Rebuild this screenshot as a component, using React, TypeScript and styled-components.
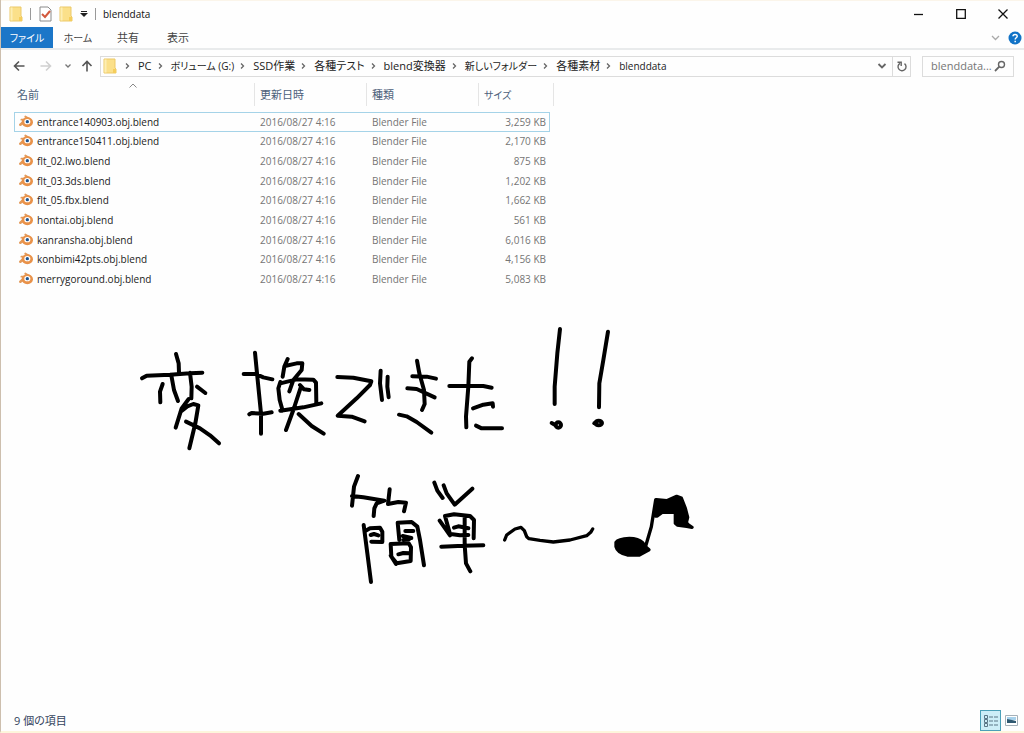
import React from "react";
import styled, { createGlobalStyle } from "styled-components";

const GlobalStyle = createGlobalStyle`
  *, *::before, *::after { box-sizing: border-box; }
  body {
    margin: 0;
    background: #fefefe;
    color: #1c1c1c;
    font: 11px/14px "Open Sans", "Noto Sans CJK JP", sans-serif;
    font-feature-settings: "palt";
  }
  button, input { font: inherit; font-feature-settings: inherit; color: inherit; }
  button { border: 0; padding: 0; background: none; }
  svg { display: block; flex: none; }
`;

const Window = styled.div`
  display: flex;
  flex-direction: column;
  min-height: 100vh;
  border-left: 1px solid #cdbfae;
  border-bottom: 2px solid #fdf6dc;
`;

const TitleBar = styled.header`
  display: flex;
  align-items: center;
  height: 27px;
  padding: 0 11px 0 8px;
  border-top: 1px solid #fbf5ea;
`;

const QuickAccess = styled.div`
  display: flex;
  align-items: center;
  gap: 7px;
  margin-right: 7px;
`;

const Divider = styled.span`
  width: 1px;
  height: 12px;
  background: #999;
`;

const Title = styled.h1`
  flex: 1;
  margin: 0;
  font-size: 10px;
  font-weight: 400;
  color: #111;
`;

const WindowButtons = styled.div`
  display: flex;
  gap: 22px;
`;

const IconButton = styled.button<{ $w?: number; $h?: number }>`
  display: flex;
  align-items: center;
  justify-content: center;
  width: ${(p) => p.$w ?? 20}px;
  height: ${(p) => p.$h ?? 20}px;
`;

const Ribbon = styled.nav`
  display: flex;
  align-items: center;
  height: 23px;
  padding-right: 2px;
  border-bottom: 2px solid #e9ebec;
`;

const Tab = styled.button<{ $primary?: boolean; $small?: boolean }>`
  width: ${(p) => (p.$primary ? 52 : 50)}px;
  height: 21px;
  font-size: ${(p) => (p.$small ? 10 : 11)}px;
  background: ${(p) => (p.$primary ? "#1b76c8" : "transparent")};
  color: ${(p) => (p.$primary ? "#fff" : "#444")};
`;

const RibbonTools = styled.div`
  display: flex;
  align-items: center;
  gap: 8px;
  margin-left: auto;
`;

const NavBar = styled.div`
  display: flex;
  align-items: center;
  height: 30px;
  padding: 2px 10px 0 8px;
`;

const NavButtons = styled.div`
  display: flex;
  align-items: center;
  width: 91px;
`;

const AddressBar = styled.div`
  display: flex;
  flex: 1;
  align-items: center;
  height: 21px;
  border: 1px solid #dcdcdc;
`;

const Crumbs = styled.ol`
  display: flex;
  flex: 1;
  align-items: center;
  margin: 0;
  padding: 0;
  list-style: none;
`;

const Crumb = styled.li<{ $small: boolean }>`
  display: flex;
  align-items: center;
  gap: 8px;
  margin-left: 6px;
  font-size: ${(p) => (p.$small ? 10 : 11)}px;
  white-space: nowrap;
  a { color: #222; text-decoration: none; }
`;

const Refresh = styled(IconButton)`
  border-left: 1px solid #dcdcdc;
`;

const SearchBox = styled.label`
  display: flex;
  align-items: center;
  width: 92px;
  height: 21px;
  margin-left: 11px;
  padding: 0 7px 0 8px;
  border: 1px solid #dcdcdc;
`;

const SearchInput = styled.input`
  flex: 1;
  min-width: 0;
  padding: 0;
  border: 0;
  outline: 0;
  background: none;
  font-size: 11px;
  &::placeholder { color: #767676; opacity: 1; }
`;

const FileTable = styled.table`
  width: 536px;
  height: 209px;
  margin-left: 13px;
  border-collapse: separate;
  border-spacing: 0;
  table-layout: fixed;
`;

const HeaderCell = styled.th<{ $w: number; $small?: boolean }>`
  position: relative;
  width: ${(p) => p.$w}px;
  height: 32px;
  padding: 0 0 2px ${(p) => (p.$w === 240 ? 3 : 6)}px;
  font-size: ${(p) => (p.$small ? 10 : 11)}px;
  font-weight: 400;
  text-align: left;
  color: #4c607a;
  &::after {
    content: "";
    position: absolute;
    top: 3px;
    right: ${(p) => (p.$w === 72 ? -4 : -1)}px;
    width: 1px;
    height: 23px;
    background: #e5e5e5;
  }
`;

const SortMark = styled.svg`
  position: absolute;
  top: 3px;
  left: 115px;
`;

const FileRow = styled.tr<{ $focused: boolean }>`
  outline: ${(p) => (p.$focused ? "1px solid #a5d3e8" : "none")};
  outline-offset: -1px;
`;

const Cell = styled.td<{ $right?: boolean }>`
  padding: 0 ${(p) => (p.$right ? 4 : 0)}px 0 6px;
  font-size: 10px;
  text-align: ${(p) => (p.$right ? "right" : "left")};
  color: #757575;
  white-space: nowrap;
`;

const NameCell = styled(Cell)`
  padding-left: 4px;
  color: #1c1c1c;
`;

const FileName = styled.div`
  display: flex;
  align-items: center;
  gap: 3px;
`;

const Canvas = styled.div`
  flex: 1;
  padding: 31px 0 0 129px;
`;

const StatusBar = styled.footer`
  display: flex;
  align-items: center;
  justify-content: space-between;
  height: 21px;
  padding: 0 6px 0 13px;
  color: #33435c;
`;

const ViewButtons = styled.div`
  display: flex;
  align-items: center;
  gap: 3px;
`;

const ViewButton = styled(IconButton)<{ $active?: boolean }>`
  border: ${(p) => (p.$active ? "1px solid #4ba0b8" : "0")};
  background: ${(p) => (p.$active ? "#cdeef8" : "transparent")};
`;

const Folder = () => (
  <svg width="14" height="16" viewBox="0 0 14 16">
    <path d="M1 1h11v9l1 1v4H1z" fill="#fbe08a" stroke="#ecc968" />
    <path d="M1.5 1.5h2v13h-2z" fill="#fdeeb4" />
    <path d="M10 11h3v4h-3z" fill="#f5cd5b" />
  </svg>
);

const Chevron = ({ d, w = 8, h = 8, color = "#666", sw = 1.3 }: { d: string; w?: number; h?: number; color?: string; sw?: number }) => (
  <svg width={w} height={h} viewBox={`0 0 ${w} ${h}`} fill="none" stroke={color} strokeWidth={sw}>
    <path d={d} />
  </svg>
);

const BlenderIcon = () => (
  <svg width="16" height="14" viewBox="0 0 48 42">
    <g fill="none" stroke="#e39a5a" strokeLinecap="round">
      <path d="M7 29 L20 18" strokeWidth="8" />
      <path d="M10 14 H26" strokeWidth="5" />
      <path d="M22 5 L37 14" strokeWidth="6" />
    </g>
    <ellipse cx="28" cy="22" rx="17" ry="15" fill="#e8924a" />
    <ellipse cx="28" cy="20" rx="9" ry="8" fill="#fff" />
    <circle cx="28" cy="20" r="5" fill="#1f5590" />
  </svg>
);

const Handwriting = () => (
  <svg width="580" height="270" viewBox="0 0 1740 810" role="img" aria-label="変換できた!! 簡単〜♪">
    <g fill="none" stroke="#000" strokeWidth="12" strokeLinecap="round" strokeLinejoin="round">
      <path d="M138 102L146 130L147 158M36 175L50 167L120 164L180 160L217 158M98 192L90 215L91 247M124 166L132 210L144 243M180 158L185 200L184 235M201 200L226 219M176 237L155 265L137 323M152 275L172 259L190 252L205 256L196 310L178 385M168 305L210 325L240 346L267 370" />
      <path d="M375 98L382 170L393 280V341M341 162L378 162L400 172L427 178M358 283L365 279L400 281L425 277M473 117L463 140L458 170M465 138L500 130L517 130L515 150L490 180L478 214M451 186L445 205L449 240L458 272M451 190L500 178L550 179L558 188L559 250M451 272L520 262L574 250M510 195L522 208L538 210M512 203L490 270L468 330M506 282L545 318L581 341" />
      <g transform="translate(570 0)">
        <path d="M52 171L100 173L154 184L150 195L110 235L53 287L95 290L134 304M182 152L180 190L186 240M203 170L202 200L206 232" />
        <path d="M291 122L298 160L312 210L314 252L306 270M277 169L320 170L348 176M262 205L290 207L344 232M237 284L260 289L290 306L334 338" />
        <path d="M456 115L448 125L445 200L438 290L439 322M388 198L450 197L490 198L515 203M459 265L490 254L518 250L519 260M468 317L485 325L546 325" />
      </g>
      <g transform="translate(1170 0)">
        <path d="M120 27L112 100L104 200V252M264 35L250 120L238 190L237 262M95 309L106 315" />
        <circle cx="115" cy="315" r="8" />
        <ellipse cx="236" cy="309" rx="10" ry="7" />
        <path d="M223 310H228" />
      </g>
      <g transform="translate(600 420)">
        <path d="M84 48L72 80L66 137M66 108L100 112L163 122L140 130L133 145L131 168M179 88L174 132L205 126L228 128L222 154" />
        <path d="M101 195L112 280L123 366M107 212L120 205L150 203L157 215L157 246L124 245M122 225L132 222L145 226M203 188L208 240M203 188L245 186L262 200L270 240L282 316M226 213L250 213M218 228L244 234M220 240L238 237" />
        <path d="M182 252L236 250L243 262L242 303L200 310L184 290L182 252M182 286L198 312M205 283L220 279L240 280" />
        <path d="M313 68L322 92L338 114M341 76L350 100L374 134L427 86M329 182L360 226M345 168L360 222M345 168L372 163L420 168L432 180L431 235M404 170L404 255L408 310L421 334M372 203L385 199L415 205M362 222L390 226L415 225M334 260L400 257L460 256" />
      </g>
      <g transform="translate(1080 420)">
        <path d="M44 240L50 225L75 207L93 202L103 212L110 230L117 236L150 241L190 246L240 240L290 227L302 217L308 207" strokeWidth="10" />
        <path d="M468 255L484 200L497 120" strokeWidth="10" />
        <path d="M378 247Q385 236 418 235Q445 235 458 248L470 263L477 269L448 285H412Q382 278 378 260Z" fill="#000" strokeWidth="10" />
        <path d="M499 119L530 122L560 109L574 114L586 145L593 172L589 188L594 194L606 202L590 199L562 195L556 190V157L518 156L502 168L496 168Z" fill="#000" strokeWidth="10" />
      </g>
    </g>
  </svg>
);

const crumbs = [
  { label: "PC" },
  { label: "ボリューム (G:)", small: true },
  { label: "SSD作業" },
  { label: "各種テスト" },
  { label: "blend変換器" },
  { label: "新しいフォルダー", small: true },
  { label: "各種素材" },
  { label: "blenddata", small: true },
];

const files = [
  ["entrance140903.obj.blend", "3,259 KB"],
  ["entrance150411.obj.blend", "2,170 KB"],
  ["flt_02.lwo.blend", "875 KB"],
  ["flt_03.3ds.blend", "1,202 KB"],
  ["flt_05.fbx.blend", "1,662 KB"],
  ["hontai.obj.blend", "561 KB"],
  ["kanransha.obj.blend", "6,016 KB"],
  ["konbimi42pts.obj.blend", "4,156 KB"],
  ["merrygoround.obj.blend", "5,083 KB"],
];

export default function App() {
  return (
    <Window>
      <GlobalStyle />
      <TitleBar>
        <QuickAccess>
          <Folder />
          <Divider />
          <IconButton aria-label="プロパティ" $w={14}>
            <svg width="13" height="16" viewBox="0 0 13 16" fill="none">
              <path d="M1 1h8l3 3v11H1z" fill="#fff" stroke="#8a8a8a" />
              <path d="M3 8l3 3 5-6" stroke="#d2583c" strokeWidth="2" />
            </svg>
          </IconButton>
          <IconButton aria-label="新しいフォルダー" $w={14}><Folder /></IconButton>
          <IconButton aria-label="カスタマイズ" $w={8}>
            <svg width="8" height="8" viewBox="0 0 8 8" fill="#222"><path d="M1 1h6v1H1zM0 3h8L4 7z" /></svg>
          </IconButton>
          <Divider />
        </QuickAccess>
        <Title>blenddata</Title>
        <WindowButtons>
          <IconButton aria-label="最小化"><Chevron w={10} h={10} d="M0 5.5h9" color="#111" /></IconButton>
          <IconButton aria-label="最大化"><Chevron w={10} h={10} d="M.7 .7h8.6v8.6H.7z" color="#111" /></IconButton>
          <IconButton aria-label="閉じる"><Chevron w={10} h={10} d="M.5 .5l9 9M9.500 .5l-9 9" color="#111" /></IconButton>
        </WindowButtons>
      </TitleBar>

      <Ribbon>
        <Tab $primary $small>ファイル</Tab>
        <Tab $small>ホーム</Tab>
        <Tab>共有</Tab>
        <Tab>表示</Tab>
        <RibbonTools>
          <IconButton aria-label="リボンの展開" $w={10}><Chevron w={9} h={6} d="M1 1l3.500 3.500L8 1" color="#aaa" /></IconButton>
          <IconButton aria-label="ヘルプ" $w={14}>
            <svg width="14" height="14" viewBox="0 0 14 14" fill="none">
              <circle cx="7" cy="7" r="6.500" fill="#1173c7" />
              <path d="M5 5.300C5 2.800 9.200 2.800 9.200 5.200 9.200 6.800 7.200 6.700 7.200 8.500M7.200 9.700v1.600" stroke="#fff" strokeWidth="1.500" />
            </svg>
          </IconButton>
        </RibbonTools>
      </Ribbon>

      <NavBar>
        <NavButtons>
          <IconButton aria-label="戻る"><Chevron w={12} h={12} d="M11.500 6H1.500M6 1.500L1.500 6L6 10.500" color="#555" sw={1.6} /></IconButton>
          <IconButton aria-label="進む" $w={34}><Chevron w={12} h={12} d="M.5 6h10M6 1.500L10.500 6L6 10.500" color="#d0d0d0" sw={1.6} /></IconButton>
          <IconButton aria-label="履歴" $w={12}><Chevron w={6} h={6} d="M.5 1.500L3 4L5.500 1.500" color="#777" /></IconButton>
          <IconButton aria-label="上へ" $w={26}><Chevron w={12} h={12} d="M6 11.500V1.500M1.500 6L6 1.500L10.500 6" color="#555" sw={1.6} /></IconButton>
        </NavButtons>
        <AddressBar>
          <IconButton as="span" $w={18}><Folder /></IconButton>
          <Crumbs>
            {crumbs.map(({ label, small }) => (
              <Crumb key={label} $small={!!small}>
                <Chevron w={5} h={8} d="M1 1.500L3.500 4L1 6.500" />
                <a href="#">{label}</a>
              </Crumb>
            ))}
          </Crumbs>
          <IconButton aria-label="履歴を表示"><Chevron w={10} h={8} d="M1.500 2L5 5.500L8.500 2" sw={1.8} /></IconButton>
          <Refresh aria-label="更新" $w={18}>
            <svg width="10" height="12" viewBox="0 0 10 12" fill="none" stroke="#666" strokeWidth="1.400">
              <path d="M3 3.300A4 4 0 1 0 7.500 3.600M.5 2.300H4.200V6" />
            </svg>
          </Refresh>
        </AddressBar>
        <SearchBox>
          <SearchInput aria-label="検索" placeholder="blenddata..." />
          <svg width="12" height="12" viewBox="0 0 12 12" fill="none" stroke="#666">
            <circle cx="7.500" cy="4.500" r="3" strokeWidth="1.400" />
            <path d="M5.300 6.700L1 11" strokeWidth="1.800" />
          </svg>
        </SearchBox>
      </NavBar>

      <FileTable>
        <thead>
          <tr>
            <HeaderCell $w={240}>
              名前
              <SortMark width="8" height="5" viewBox="0 0 8 5" fill="none" stroke="#888"><path d="M.5 4.500L4 1L7.500 4.500" /></SortMark>
            </HeaderCell>
            <HeaderCell $w={112}>更新日時</HeaderCell>
            <HeaderCell $w={112}>種類</HeaderCell>
            <HeaderCell $w={72} $small>サイズ</HeaderCell>
          </tr>
        </thead>
        <tbody>
          {files.map(([name, size], i) => (
            <FileRow key={name} $focused={i === 0}>
              <NameCell><FileName><BlenderIcon />{name}</FileName></NameCell>
              <Cell>2016/08/27 4:16</Cell>
              <Cell>Blender File</Cell>
              <Cell $right>{size}</Cell>
            </FileRow>
          ))}
        </tbody>
      </FileTable>

      <Canvas><Handwriting /></Canvas>

      <StatusBar>
        <span>9 個の項目</span>
        <ViewButtons>
          <ViewButton aria-label="詳細表示" $active $w={21} $h={21}>
            <svg width="16" height="14" viewBox="0 0 16 14" fill="none" stroke="#5b7686">
              <path d="M1.500 1.500h3v3h-3zM1.500 5.500h3v3h-3zM1.500 9.500h3v3h-3z" />
              <path d="M6 3h4M11 3h4M6 7h4M11 7h4M6 11h4M11 11h4" />
            </svg>
          </ViewButton>
          <ViewButton aria-label="大アイコン" $w={14} $h={21}>
            <svg width="13" height="11" viewBox="0 0 13 11">
              <path d="M.5 .5h12v10H.5z" fill="#fff" stroke="#a5b0b8" />
              <path d="M2 2h9v3H2z" fill="#a8d2ec" />
              <path d="M2 4l5 1 4 1v2H2z" fill="#2f5870" />
            </svg>
          </ViewButton>
        </ViewButtons>
      </StatusBar>
    </Window>
  );
}
